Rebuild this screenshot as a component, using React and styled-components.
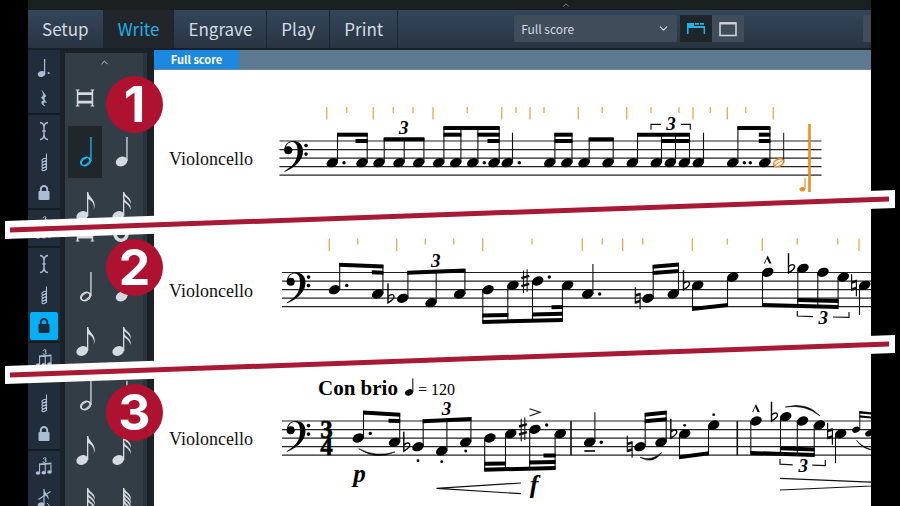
import React from "react";
import styled, { createGlobalStyle, css } from "styled-components";
import { ChevronDown, ChevronUp } from "lucide-react";

const uiFont = '"Noto Sans CJK SC", "Noto Sans", sans-serif';
const serif = '"Liberation Serif", serif';

const GlobalStyle = createGlobalStyle`
  * { box-sizing: border-box; }
  body { margin: 0; background: #000; }
  button, select { font: inherit; color: inherit; border: 0; padding: 0; margin: 0; background: none; }
`;

/* ---------- shell ---------- */

const Page = styled.div`
  height: 100vh;
  padding: 0 29px 0 28px;
  display: flex;
  flex-direction: column;
  overflow: hidden;
  background: #000;
  color: #d3dbe3;
  font-family: ${uiFont};
`;

const TopStrip = styled.div`
  flex: 0 0 10px;
  display: flex;
  justify-content: center;
  align-items: center;
  padding-left: 232px;
  background: #1a1f20;
  color: #8d999f;
  svg { height: 10px; }
`;

const Header = styled.header`
  flex: 0 0 40px;
  display: flex;
  align-items: stretch;
  background: linear-gradient(#33465a, #293441);
  border-bottom: 2px solid #171f27;
`;

const Modes = styled.nav`
  display: flex;
`;

const Mode = styled.button`
  padding: 0 14px;
  font-size: 17px;
  line-height: 38px;
  border-right: 1px solid #1c2630;
  cursor: pointer;
  ${(p) => p.$active && css`
    background: #20262b;
    color: #1fb1e8;
  `}
`;

const Tools = styled.div`
  display: flex;
  align-items: center;
  margin-left: 116px;
  padding-bottom: 1px;
`;

const LayoutPicker = styled.label`
  display: grid;
  width: 163px;
  height: 27px;
  margin-right: 3px;
  align-items: center;
  background: #414c5a;
  border-radius: 2px;

  select, svg { grid-area: 1 / 1; }
  select {
    appearance: none;
    height: 27px;
    padding-left: 7px;
    font-size: 12px;
    outline: 0;
  }
  svg { justify-self: end; margin-right: 7px; pointer-events: none; }
`;

const ViewButton = styled.button`
  display: grid;
  place-items: center;
  width: 32px;
  height: 27px;
  background: ${(p) => (p.$active ? "#1e252b" : "#414c5a")};
  color: ${(p) => (p.$active ? "#1fb1e8" : "#cdd3d8")};
`;

const EndTool = styled.div`
  width: 8px;
  height: 27px;
  margin: 5px 0 0 auto;
  background: #414c5a;
  border-radius: 2px 0 0 2px;
`;

/* ---------- strips ---------- */

const Strip = styled.section`
  position: relative;
  flex: ${(p) => (p.$height ? `0 0 ${p.$height}px` : "1 1 0")};
  min-height: 0;
  display: grid;
  grid-template-columns: 32px 94px minmax(0, 1fr);
  grid-template-rows: minmax(0, 1fr);
  background: #1a2127;
`;

const Rail = styled.div`
  display: flex;
  flex-direction: column;
  justify-content: ${(p) => (p.$fromEnd ? "flex-end" : "flex-start")};
  padding-top: ${(p) => p.$top || 0}px;
  overflow: hidden;
  background: #212d3a;
`;

const RailButton = styled.button`
  flex: 0 0 31px;
  display: grid;
  place-items: center;
  color: #a9bdd4;
  span {
    display: grid;
    place-items: center;
    width: 28px;
    height: 28px;
    border-radius: 2px;
    ${(p) => p.$active && css`
      background: #04aff7;
      color: #1d2c3a;
    `}
  }
`;

const RailRule = styled.div`
  flex: 0 0 2px;
  background: #151c24;
`;

const Palette = styled.div`
  margin: ${(p) => p.$gap || 0}px 7px 0 5px;
  overflow: hidden;
  background: #333d46;
  border-right: 4px solid #2b343c;
`;

const PaletteUp = styled.button`
  display: grid;
  place-items: center;
  width: 100%;
  height: 18px;
  color: #cfd4d8;
`;

const Cells = styled.div`
  display: grid;
  grid-template-columns: 36px 36px;
  grid-auto-rows: 54px;
  margin-left: 2px;
  margin-top: ${(p) => p.$shift || 0}px;
`;

const Cell = styled.button`
  display: grid;
  place-items: center;
  margin: 1px;
  color: ${(p) => (p.$active ? "#1fb8ee" : "#d5dae0")};
  background: ${(p) => (p.$active ? "#20272c" : "transparent")};
`;

const Badge = styled.div`
  position: absolute;
  left: 78px;
  top: ${(p) => p.$top}px;
  width: 57px;
  height: 57px;
  border-radius: 50%;
  background: #ae1230;
  color: #fff;
  font: 700 50px/57px Inter, sans-serif;
  text-align: center;
`;

const Score = styled.div`
  display: flex;
  flex-direction: column;
  background: #fff;
  overflow: hidden;
`;

const TabBar = styled.div`
  flex: 0 0 20px;
  display: flex;
  background: #5c7990;
  border-bottom: 1px solid #71889c;
`;

const ScoreTab = styled.button`
  width: 85px;
  background: #1d88e0;
  color: #fff;
  font-size: 11px;
  font-weight: 700;
  line-height: 19px;
`;

const System = styled.div`
  flex: 1;
  min-height: 0;
  display: flex;
`;

const Instrument = styled.div`
  flex: 0 0 115px;
  padding: ${(p) => p.$top}px 0 0 15px;
  color: #111;
  font: 18px/20px ${serif};
`;

const Notation = styled.svg`
  flex: 1;
  min-width: 0;
  height: 100%;
  display: block;
  overflow: hidden;
  text { font-family: ${serif}; }
`;

const Slash = styled.svg`
  position: absolute;
  z-index: 2;
  left: -23px;
  bottom: -10px;
  width: calc(100% + 47px);
  height: 49px;
`;

const Separator = () => (
  <Slash viewBox="0 0 890 49" preserveAspectRatio="none" aria-hidden="true">
    <path d="M0 31L890 0V18L0 49Z" fill="#fff" />
    <path d="M5 37.5L884 6.5V11.5L5 42.5Z" fill="#a71935" />
  </Slash>
);

/* ---------- interface icons ---------- */

const GalleryIcon = () => (
  <svg width="20" height="14" viewBox="0 0 20 14" fill="currentColor">
    <path d="M1 1h7v3h11v8h-1.4V6H2.6v6H1z" />
    <path d="M9 1h4v1.8H9zM14 1h4v1.8h-4z" />
  </svg>
);

const PageIcon = () => (
  <svg width="20" height="16" viewBox="0 0 20 16" fill="none" stroke="currentColor" strokeWidth="1.6">
    <rect x="2" y="2" width="16" height="12.5" />
    <path d="M2 2.5h16" strokeWidth="2" />
  </svg>
);

const railShapes = {
  dotted: (
    <g fill="currentColor">
      <ellipse cx="9.5" cy="19" rx="3.8" ry="2.8" transform="rotate(-20 9.5 19)" />
      <path d="M12 4h1.2v15H12z" />
      <circle cx="16.6" cy="18" r="1.1" />
    </g>
  ),
  rest: (
    <path d="M10 4.5L14 10C11.5 12 12 13.5 14.5 16.5C11 15.5 10.5 17.5 12.8 20C9 18.3 8.5 14.8 12 14.8L9.4 11.5C12 9.5 11.6 7.5 10 4.5Z" fill="currentColor" stroke="currentColor" strokeWidth=".6" />
  ),
  caret: (
    <path d="M8 3.5C11 3.7 12 6 12 9V15C12 18 11 20.3 8 20.5M16 3.5C13 3.7 12 6 12 9M12 15C12 18 13 20.3 16 20.5M10.3 12H13.7" fill="none" stroke="currentColor" strokeWidth="1.4" />
  ),
  chord: (
    <g fill="none" stroke="currentColor" strokeWidth="1.1">
      <path d="M14.5 3.5V19.5" />
      {[10, 13, 16, 19].map((y) => (
        <ellipse key={y} cx="12.2" cy={y} rx="2.4" ry="1.5" transform={`rotate(-25 12.2 ${y})`} />
      ))}
    </g>
  ),
  lock: (
    <g>
      <rect x="6.5" y="10" width="11" height="9" rx="1" fill="currentColor" />
      <path d="M8.8 10.5V8.2a3.2 3.2 0 0 1 6.4 0v2.3" fill="none" stroke="currentColor" strokeWidth="1.9" />
    </g>
  ),
  tuplet: (
    <g fill="currentColor">
      <path d="M7 8.5L19.5 7.5V9.3L7 10.3zM7 9h1.1v9H7zM12.7 9h1.1v9h-1.1zM18.4 8h1.1v9h-1.1z" />
      <ellipse cx="6" cy="18" rx="2.3" ry="1.8" />
      <ellipse cx="11.8" cy="17.8" rx="2.3" ry="1.8" />
      <ellipse cx="17.5" cy="17" rx="2.3" ry="1.8" />
      <path d="M10.8 3.8Q12.5 2 14 3.1Q14.7 4.5 12.8 4.9Q15 5.3 14.1 6.7Q12.3 8 10.6 6.8" stroke="currentColor" strokeWidth="1" fill="none" />
    </g>
  ),
  grace: (
    <g fill="currentColor">
      <ellipse cx="9" cy="19" rx="3.4" ry="2.6" transform="rotate(-20 9 19)" />
      <path d="M11.4 3h1.2v16h-1.2zM12.6 4C13 8 18 9 16.3 14C16 10.5 13.5 10 12.6 9z" />
      <path d="M6.5 13.5L18.5 5.5" stroke="currentColor" strokeWidth="1.1" />
      <path d="M15 17L18 20" stroke="currentColor" strokeWidth="1" />
    </g>
  ),
};

const RailTool = ({ shape, label, active }) => (
  <RailButton $active={active} aria-label={label} aria-pressed={!!active}>
    <span>
      <svg width="24" height="24" viewBox="0 0 24 24">{railShapes[shape]}</svg>
    </span>
  </RailButton>
);

const flag = (x, y) => `M${x} ${y}C${x + 1} ${y + 6} ${x + 10} ${y + 9} ${x + 5.4} ${y + 18}C${x + 7.5} ${y + 12} ${x + 3} ${y + 8} ${x} ${y + 7}Z`;
const smallFlag = (x, y) => `M${x} ${y}C${x + 1} ${y + 4} ${x + 8.5} ${y + 6} ${x + 6.5} ${y + 12}C${x + 6} ${y + 8} ${x + 2.5} ${y + 6} ${x} ${y + 4}Z`;

const durationShapes = {
  breve: (
    <g fill="currentColor">
      <path d="M4 10.3h16v2.8H4zM4 18.7h16v2.8H4z" />
      <path d="M2.8 7.5h3.6v1H5.4v15h1v1H2.8v-1h1v-15h-1zM17.6 7.5h3.6v1h-1v15h1v1h-3.6v-1h1v-15h-1z" />
    </g>
  ),
  whole: <ellipse cx="12" cy="17" rx="6" ry="6.3" fill="none" stroke="currentColor" strokeWidth="3.6" />,
  half: (
    <g>
      <path d="M17.3 1h1.3v24h-1.3z" fill="currentColor" />
      <ellipse cx="12.6" cy="25.5" rx="5.2" ry="3.8" transform="rotate(-28 12.6 25.5)" fill="none" stroke="currentColor" strokeWidth="1.5" />
      <ellipse cx="12.6" cy="25.5" rx="4.8" ry="2.8" transform="rotate(-38 12.6 25.5)" fill="none" stroke="currentColor" strokeWidth="1" />
    </g>
  ),
  quarter: (
    <g fill="currentColor">
      <path d="M17.3 1h1.3v24h-1.3z" />
      <ellipse cx="12.6" cy="25.5" rx="6" ry="4.6" transform="rotate(-25 12.6 25.5)" />
    </g>
  ),
  eighth: (
    <g fill="currentColor">
      <path d="M14 2h1.3v24H14z" />
      <path d={flag(15, 2)} />
      <ellipse cx="9.2" cy="26" rx="6" ry="4.6" transform="rotate(-25 9.2 26)" />
    </g>
  ),
  sixteenth: (
    <g fill="currentColor">
      <path d="M14 2h1.3v24H14z" />
      <path d={smallFlag(15, 2)} />
      <path d={smallFlag(15, 8)} />
      <ellipse cx="9.2" cy="26" rx="6" ry="4.6" transform="rotate(-25 9.2 26)" />
    </g>
  ),
  thirtySecond: (
    <g fill="currentColor">
      <path d="M14 0h1.3v28H14z" />
      {[0, 5, 10].map((y) => <path key={y} d={smallFlag(15, y)} />)}
      <ellipse cx="9.2" cy="29" rx="6" ry="4.6" />
    </g>
  ),
  sixtyFourth: (
    <g fill="currentColor">
      <path d="M14 0h1.3v28H14z" />
      {[0, 4, 8, 12].map((y) => <path key={y} d={smallFlag(15, y)} />)}
      <ellipse cx="9.2" cy="29" rx="6" ry="4.6" />
    </g>
  ),
};

const Duration = ({ shape, active }) => (
  <Cell aria-label={shape} $active={active}>
    <svg width="24" height="32" viewBox="0 0 24 32">{durationShapes[shape]}</svg>
  </Cell>
);

/* ---------- music drawing ---------- */

const Staff = ({ x, end = "100%", top, clefX }) => (
  <g>
    {[0, 1, 2, 3, 4].map((i) => (
      <line key={i} x1={x} x2={end} y1={top + i * 8.55} y2={top + i * 8.55} stroke="#222" strokeWidth="1.2" />
    ))}
    <g transform={`translate(${clefX} ${top + 8.6})`}>
      <circle cx="4.2" cy="0.6" r="4" />
      <path d="M.4 .5C.4 -5 4 -8.6 9.2 -8.6C15.5 -8.6 19 -4.5 19 1.5C19 11 11 18 .8 22.2C.3 22.3 .1 21.7 .6 21.3C9 16.5 13.6 10.5 13.6 1.6C13.6 -4 11.8 -7.6 8.3 -7.6C5 -7.6 2.2 -5.3 1.8 -2Z" />
      <circle cx="22" cy="-4" r="1.8" />
      <circle cx="22" cy="4.5" r="1.8" />
    </g>
  </g>
);

const Head = ({ x, y, small }) => (
  <ellipse cx={x} cy={y} rx={small ? 4 : 6} ry={small ? 2.9 : 4.3} transform={`rotate(-24 ${x} ${y})`} />
);

/* Each note is [x, y, stemEnd]; a stem end above the head puts the stem on its right. */
const Notes = ({ items }) => items.map(([x, y, end]) => {
  const sx = end < y ? x + 5.2 : x - 5.2;
  return (
    <g key={x}>
      <Head x={x} y={y} />
      <line x1={sx} x2={sx} y1={y} y2={end} stroke="#111" strokeWidth="1.1" />
    </g>
  );
});

/* Each beam is [x1, y1, x2, y2], the top edge of a bar four units thick. */
const Beams = ({ items }) => items.map(([a, b, c, d], i) => (
  <path key={i} d={`M${a - 0.5} ${b}L${c + 0.5} ${d}v4L${a - 0.5} ${b + 4}Z`} />
));

const Dots = ({ items, r = 1.7 }) => items.map(([x, y]) => <circle key={`${x}-${y}`} cx={x} cy={y} r={r} />);

const Ticks = ({ y, long, short }) => (
  <g stroke="#e9a84e" strokeWidth="1.3">
    {long.map((x) => <line key={x} x1={x} x2={x} y1={y} y2={y + 12.6} />)}
    {short.map((x) => <line key={x} x1={x} x2={x} y1={y} y2={y + 6} />)}
  </g>
);

const Three = ({ x, y }) => (
  <text x={x} y={y} textAnchor="middle" fontSize="19" fontWeight="700" fontStyle="italic">3</text>
);

const Line = ({ d, w = 1.2 }) => <path d={d} fill="none" stroke="#111" strokeWidth={w} />;

const Flat = ({ x, y }) => (
  <path transform={`translate(${x} ${y})`} d="M.5 -15V4.5C3 3 7 .5 6.5 -2C6 -4.5 3 -4 .9 -2" fill="none" stroke="#000" strokeWidth="1.4" />
);

const Natural = ({ x, y }) => (
  <g transform={`translate(${x} ${y})`}>
    <Line d="M-2.4 -11V5.5M2.4 -5.5V11" w={1.2} />
    <Line d="M-2.4 -2.8L2.4 -4.3M-2.4 4.3L2.4 2.8" w={2.6} />
  </g>
);

const Sharp = ({ x, y }) => (
  <g transform={`translate(${x} ${y})`}>
    <Line d="M-1.8 -10.5V12M1.8 -11.8V10.7" w={1.1} />
    <Line d="M-4 -2.8L4 -5.2M-4 5.2L4 2.8" w={2.4} />
  </g>
);

const Marcato = ({ x, y }) => <path d={`M${x - 3.8} ${y + 8}L${x} ${y}L${x + 3.8} ${y + 8}H${x + 1.6}L${x - 0.8} ${y + 3}L${x - 2.8} ${y + 8}Z`} />;

const OpeningSystem = () => (
  <Notation aria-label="Unmetered rhythm on one pitch">
    <g transform="translate(-269 -70)">
      <Ticks y={107}
        long={[326.7, 373.3, 433, 501.7, 530, 578.3, 626.7, 693, 727.3, 773.3]}
        short={[346.7, 393.3, 413, 467.3, 516, 544, 602.3, 651, 679, 710.3, 745.7]} />
      <Staff x={279.5} end={821.5} top={141} clefX={284} />
      <Notes items={[
        [332.3, 162.7, 133], [362, 162.7, 133], [379, 162.7, 138], [399, 162.7, 138], [418.7, 162.7, 138],
        [438.7, 162.7, 127], [455.7, 162.7, 127], [472.7, 162.7, 127], [494, 162.7, 127], [507.3, 162.7, 132.7],
        [549.7, 162.7, 133], [566.8, 162.7, 133], [584, 162.7, 138], [608, 162.7, 138], [632.3, 162.7, 133],
        [656.3, 162.7, 133], [670.3, 162.7, 133], [684.3, 162.7, 133], [698.3, 162.7, 132.7],
        [732.7, 162.7, 127], [764.7, 162.7, 127],
      ]} />
      <Beams items={[
        [337.5, 132.7, 367.2, 132.7], [356, 139, 367.2, 139], [384.2, 137.3, 423.9, 137.3],
        [443.9, 126, 499.2, 126], [443.9, 132.7, 460.9, 132.7], [478, 132.7, 499.2, 132.7], [488, 139, 499.2, 139],
        [554.9, 132.7, 572, 132.7], [554.9, 139, 572, 139], [589.2, 137.3, 613.2, 137.3],
        [637.5, 132.7, 689.5, 132.7], [661.5, 139, 689.5, 139],
        [737.9, 126, 769.9, 126], [759.3, 132.7, 769.9, 132.7], [759.3, 139, 769.9, 139],
      ]} />
      <Dots items={[[344, 162.7], [484.3, 162.7], [519.3, 162.7], [744.3, 162.7], [750.3, 162.7]]} />
      <Three x={403.7} y={134} />
      <Three x={671} y={130} />
      <Line d="M651 129.7V124.3H661M681 124.3H690.3V129.7" />
      <Line d="M783.7 132.7V162" w={1} />
      <g fill="none" stroke="#ef8a22">
        <ellipse cx="778.7" cy="162.7" rx="5.3" ry="3.5" transform="rotate(-24 778.7 162.7)" strokeWidth="1.6" />
        <path d="M775 165L782.5 160.5" strokeWidth="1" />
        <path d="M809.5 124V192" strokeWidth="2.6" />
        <path d="M805 178V189" strokeWidth="1.2" />
        <ellipse cx="802.3" cy="189.3" rx="2.4" ry="1.8" fill="#ef8a22" />
      </g>
    </g>
  </Notation>
);

const PitchedSystem = () => (
  <Notation aria-label="Unmetered melody">
    <g transform="translate(-269 -229)">
      <Ticks y={238.5}
        long={[329.3, 396.7, 482.7, 582.3, 622.7, 692.3, 762.3, 859]}
        short={[357.7, 425.3, 453.7, 532, 602.3, 642.7, 727.3, 797.3, 837.7]} />
      <Staff x={282} end={3000} top={272.5} clefX={286.5} />
      <Notes items={[
        [334.5, 289.7, 263], [377.7, 294, 265], [402.7, 298.3, 271], [431, 302.7, 270], [459.7, 294, 269],
        [488, 289.7, 323], [513, 285.3, 322], [537.7, 281, 321], [567.6, 285.3, 321],
        [587.7, 294, 264], [648, 298.3, 265], [673.3, 294, 263], [697.7, 285.3, 310], [732.7, 277, 306],
        [767.7, 272.3, 306], [803, 268.3, 306], [823, 272.3, 306], [843.3, 277, 307], [864.7, 285.3, 315],
      ]} />
      <Beams items={[
        [339.7, 262.7, 382.9, 264.5], [372.3, 270.3, 382.9, 270.7], [407.9, 270.8, 464.9, 268.4],
        [482.8, 320, 562.4, 318], [482.8, 313.4, 507.8, 313], [532.5, 312.4, 562.4, 311.8], [552, 305.3, 562.4, 305],
        [653.2, 264.7, 678.5, 262.5], [653.2, 271, 678.5, 269], [692.5, 307, 727.5, 303],
        [762.5, 303, 838.1, 305], [797.8, 298, 838.1, 299],
      ]} />
      <Dots items={[[346.7, 285.4], [549.3, 277], [599.7, 294]]} />
      <Flat x={387.5} y={298.3} />
      <Flat x={683} y={285.3} />
      <Flat x={788} y={268.3} />
      <Sharp x={525.3} y={281} />
      <Natural x={637.7} y={298.3} />
      <Natural x={854} y={285.3} />
      <Marcato x={767.7} y={255.5} />
      <Three x={435.7} y={267} />
      <Three x={823.3} y={324} />
      <Line d="M797.3 311V316L813 316.7M833 317L849 317.3V312" />
    </g>
  </Notation>
);

const MeteredSystem = () => (
  <Notation aria-label="Melody in three four time">
    <g transform="translate(-269 -374)">
      <text x="318" y="395" fontSize="21" fontWeight="700">Con brio</text>
      <ellipse cx="409" cy="392.4" rx="4.2" ry="3" transform="rotate(-24 409 392.4)" />
      <Line d="M412.8 378.5V392" w={1.1} />
      <text x="418" y="395" fontSize="16">= 120</text>
      <Staff x={282} end={3000} top={421} clefX={286.5} />
      <text fontSize="25" fontWeight="700" textAnchor="middle" stroke="#000" strokeWidth=".6">
        <tspan x="326.5" y="438">3</tspan>
        <tspan x="326.5" y="455">4</tspan>
      </text>
      <Line d="M571 421V455.2M737.3 421V455.2" w={1.6} />
      <Notes items={[
        [358.3, 438, 411], [394.5, 442.3, 413], [418, 446.7, 419], [441.7, 451, 418], [465.7, 442.3, 417],
        [489.9, 438, 471], [510.7, 433.7, 470], [534.9, 429.3, 469], [560.3, 433.7, 469],
        [589.7, 442.3, 412.3], [640, 446.7, 413], [661, 442.3, 411], [684.7, 433.7, 458], [713.7, 425, 454],
        [756, 421, 454], [785.7, 416.7, 454], [802.5, 421, 455], [819.4, 425, 456], [840.7, 433.7, 463.3],
      ]} />
      <Beams items={[
        [363.5, 410.5, 399.7, 412.7], [389, 418.7, 399.7, 419], [423.2, 419.3, 470.9, 417],
        [484.7, 467.7, 555.1, 466], [484.7, 461.8, 505.5, 461.4], [529.7, 460.5, 555.1, 460], [544, 453.6, 555.1, 453.4],
        [645.2, 412.7, 666.2, 410.6], [645.2, 419.3, 666.2, 417.3], [679.5, 455.2, 708.5, 451.3],
        [750.8, 451, 814.2, 453], [780.5, 446.3, 814.2, 447.5],
      ]} />
      <Dots items={[[370.3, 433.4], [546.7, 425], [601.3, 442.3]]} />
      <Dots r={1.4} items={[[418, 460.7], [441.7, 461.7], [465.7, 451], [684.7, 425.3], [713.7, 414.7]]} />
      <Flat x={403.3} y={446.7} />
      <Flat x={670.3} y={433.7} />
      <Flat x={771} y={416.7} />
      <Sharp x={523} y={429.3} />
      <Natural x={629.7} y={446.7} />
      <Natural x={830} y={433.7} />
      <Marcato x={756} y={404} />
      <Line d="M529.5 408.8L540 412.3L529.5 416" />
      <Line d="M584.3 451H595" w={1.7} />
      <path d="M358.7 448.7Q376 460.5 395 452Q376 457.8 358.7 448.7Z" stroke="#000" strokeWidth=".6" />
      <path d="M640 457.3Q653 465 661.7 452.5Q652 461.5 640 457.3Z" stroke="#000" strokeWidth=".6" />
      <path d="M785.3 407Q807 401.5 819.7 415.7Q805 404 785.3 407Z" stroke="#000" strokeWidth=".6" />
      <path d="M856.5 440.3Q863 450 876 450.5Q863 448.5 856.5 440.3Z" stroke="#000" strokeWidth=".6" />
      <Head x={856} y={429.7} small />
      <Head x={869} y={433.3} small />
      <Line d="M859.8 429V411.5" w={1} />
      <path d="M859.3 411L879 413v2.4L859.3 413.4ZM859.3 415.2L879 417.2v2L859.3 417.4Z" />
      <Three x={446.5} y={415} />
      <Three x={803.3} y={472} />
      <Line d="M780 459V464.2L792.7 464.8M812.3 465.2L825.3 465.7V460" />
      <text x="359.5" y="482" fontSize="25" fontWeight="700" fontStyle="italic" textAnchor="middle">p</text>
      <text x="534" y="493" fontSize="26" fontWeight="700" fontStyle="italic" textAnchor="middle">f</text>
      <Line d="M521 483L436.5 488.3L521 493.7" />
      <Line d="M780 478.3L921 484.3M780 490L921 483.8" />
    </g>
  </Notation>
);

/* ---------- page ---------- */

const modes = ["Setup", "Write", "Engrave", "Play", "Print"];

export default function App() {
  return (
    <Page>
      <GlobalStyle />
      <TopStrip><ChevronUp size={12} /></TopStrip>
      <Header>
        <Modes>
          {modes.map((m) => <Mode key={m} $active={m === "Write"}>{m}</Mode>)}
        </Modes>
        <Tools>
          <LayoutPicker>
            <select aria-label="Layout" defaultValue="Full score">
              <option>Full score</option>
            </select>
            <ChevronDown size={13} />
          </LayoutPicker>
          <ViewButton $active aria-label="Galley view"><GalleryIcon /></ViewButton>
          <ViewButton aria-label="Page view"><PageIcon /></ViewButton>
        </Tools>
        <EndTool />
      </Header>

      <Strip $height={179}>
        <Rail $top={1}>
          <RailTool shape="dotted" label="Notes" />
          <RailTool shape="rest" label="Rests" />
          <RailRule />
          <RailTool shape="caret" label="Insert" />
          <RailTool shape="chord" label="Chords" />
          <RailTool shape="lock" label="Lock to duration" />
          <RailRule />
          <RailTool shape="tuplet" label="Tuplets" />
        </Rail>
        <Palette $gap={3}>
          <PaletteUp aria-label="Scroll up"><ChevronUp size={11} /></PaletteUp>
          <Cells>
            <Duration shape="breve" />
            <Duration shape="whole" />
            <Duration shape="half" active />
            <Duration shape="quarter" />
            <Duration shape="eighth" />
            <Duration shape="sixteenth" />
          </Cells>
        </Palette>
        <Score>
          <TabBar><ScoreTab>Full score</ScoreTab></TabBar>
          <System>
            <Instrument $top={79}>Violoncello</Instrument>
            <OpeningSystem />
          </System>
        </Score>
        <Badge $top={26}>1</Badge>
        <Separator />
      </Strip>

      <Strip $height={145}>
        <Rail $fromEnd>
          <RailTool shape="tuplet" label="Tuplets" />
          <RailRule />
          <RailTool shape="caret" label="Insert" />
          <RailTool shape="chord" label="Chords" />
          <RailTool shape="lock" label="Lock to duration" active />
          <RailRule />
          <RailTool shape="tuplet" label="Tuplets" />
        </Rail>
        <Palette>
          <Cells $shift={-23}>
            <Duration shape="breve" />
            <Duration shape="whole" />
            <Duration shape="half" />
            <Duration shape="quarter" />
            <Duration shape="eighth" />
            <Duration shape="sixteenth" />
          </Cells>
        </Palette>
        <Score>
          <System>
            <Instrument $top={52}>Violoncello</Instrument>
            <PitchedSystem />
          </System>
        </Score>
        <Badge $top={10}>2</Badge>
        <Separator />
      </Strip>

      <Strip>
        <Rail $top={13}>
          <RailTool shape="chord" label="Chords" />
          <RailTool shape="lock" label="Lock to duration" />
          <RailRule />
          <RailTool shape="tuplet" label="Tuplets" />
          <RailTool shape="grace" label="Grace notes" />
        </Rail>
        <Palette>
          <Cells $shift={-5}>
            <Duration shape="half" />
            <Duration shape="quarter" />
            <Duration shape="eighth" />
            <Duration shape="sixteenth" />
            <Duration shape="thirtySecond" />
            <Duration shape="sixtyFourth" />
          </Cells>
        </Palette>
        <Score>
          <System>
            <Instrument $top={55}>Violoncello</Instrument>
            <MeteredSystem />
          </System>
        </Score>
        <Badge $top={10}>3</Badge>
      </Strip>
    </Page>
  );
}
